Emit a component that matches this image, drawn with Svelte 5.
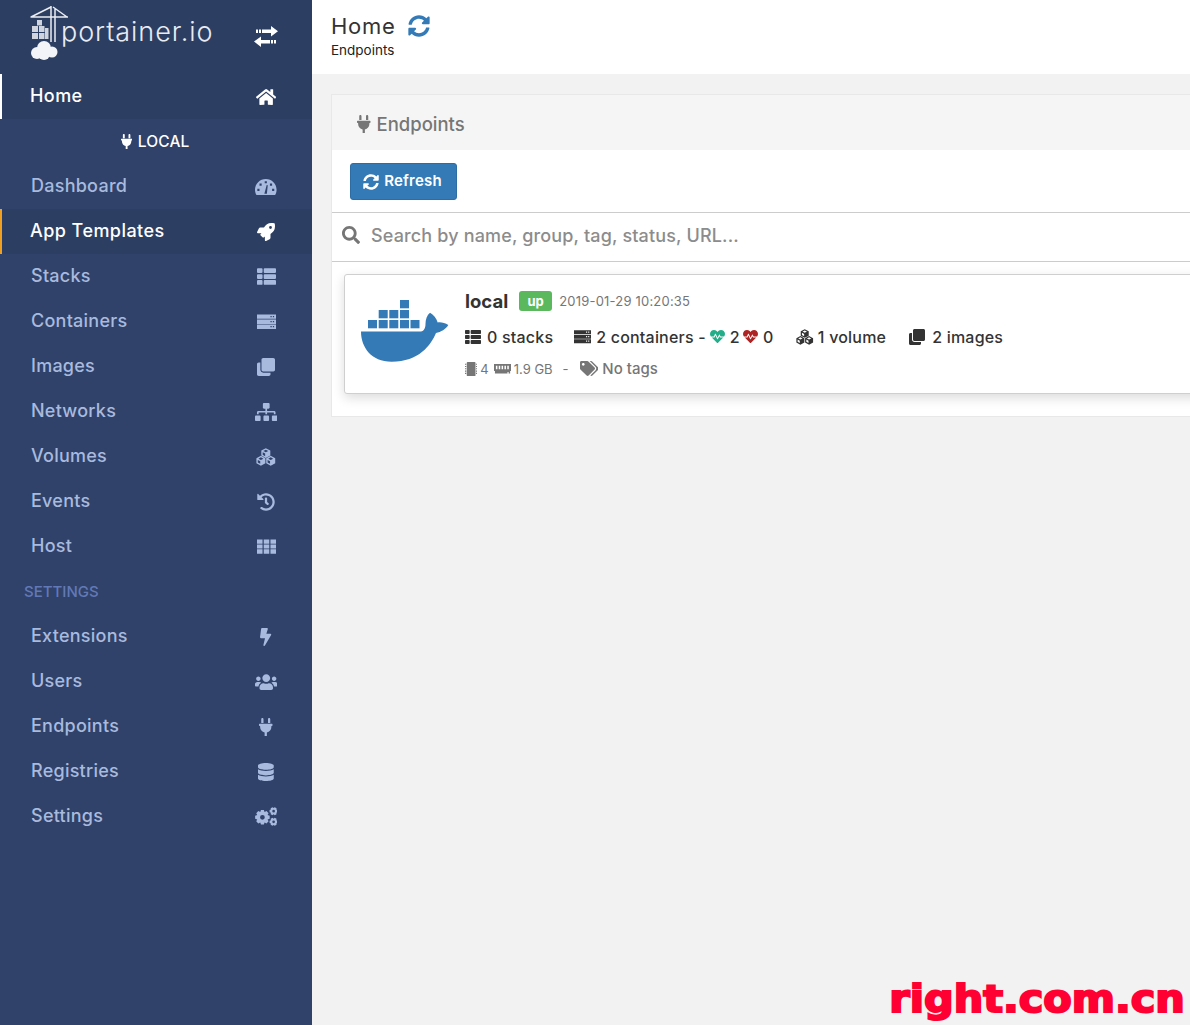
<script>
  // builds a toothed wheel path, used for the settings icon
  function gear(cx, cy, ro, ri, hole, teeth) {
    let d = '';
    const step = (Math.PI * 2) / teeth;
    for (let i = 0; i < teeth; i++) {
      const a = i * step;
      const pts = [
        [ri, a - step * 0.5],
        [ro, a - step * 0.25],
        [ro, a + step * 0.25],
        [ri, a + step * 0.5]
      ];
      for (const [r, t] of pts) {
        d += (d ? 'L' : 'M') + (cx + r * Math.cos(t)).toFixed(2) + ' ' + (cy + r * Math.sin(t)).toFixed(2);
      }
    }
    d += `Z M${cx - hole} ${cy}a${hole} ${hole} 0 1 0 ${hole * 2} 0a${hole} ${hole} 0 1 0 ${-hole * 2} 0Z`;
    return d;
  }

  function cube(x, y) {
    return `M${x} ${y - 6}L${x + 5.5} ${y - 3}V${y + 3}L${x} ${y + 6}L${x - 5.5} ${y + 3}V${y - 3}Z` +
      `M${x} ${y - 4.2}L${x + 3} ${y - 2.6}L${x} ${y - 1}L${x - 3} ${y - 2.6}Z` +
      `M${x - 3.8} ${y - 1}V${y + 2}L${x - 0.8} ${y + 3.8}V${y + 0.6}Z`;
  }

  const icons = {
    exchange: ['0 0 24 21', 'M2 3.5h2V7H2zM5 3.5h2V7H5zM8 3.5h9V0l7 5.2-7 5.2V7H8zM0 15.5L7 10.5V14h9v3.5H7V21zM17 14h2v3.5h-2zM20 14h2v3.5h-2z'],
    home: ['0 0 576 512', 'M280.37 148.26L96 300.11V464a16 16 0 0 0 16 16l112.06-.29a16 16 0 0 0 15.92-16V368a16 16 0 0 1 16-16h64a16 16 0 0 1 16 16v95.64a16 16 0 0 0 16 16.05L464 480a16 16 0 0 0 16-16V300L295.67 148.26a12.19 12.19 0 0 0-15.3 0zM571.6 251.47L488 182.56V44.05a12 12 0 0 0-12-12h-56a12 12 0 0 0-12 12v72.61L318.47 43a48 48 0 0 0-61 0L4.34 251.47a12 12 0 0 0-1.6 16.9l25.5 31A12 12 0 0 0 45.15 301l235.22-193.74a12.19 12.19 0 0 1 15.3 0L530.9 301a12 12 0 0 0 16.9-1.6l25.5-31a12 12 0 0 0-1.7-16.93z'],
    plug: ['0 0 384 512', 'M256 144V32c0-17.673 14.327-32 32-32s32 14.327 32 32v112h-64zm112 16H16c-8.837 0-16 7.163-16 16v32c0 8.837 7.163 16 16 16h16v32c0 77.406 54.969 141.971 128 156.796V512h64v-99.204c73.031-14.825 128-79.39 128-156.796v-32h16c8.837 0 16-7.163 16-16v-32c0-8.837-7.163-16-16-16zM128 144V32c0-17.673-14.327-32-32-32S64 14.327 64 32v112h64z'],
    gauge: ['0 0 24 20', 'M12 1C5.4 1 0 6.4 0 13c0 2.2.6 4.3 1.7 6h20.6c1.1-1.7 1.7-3.8 1.7-6 0-6.6-5.4-12-12-12zM10.8 3.5h2.4v2.4h-2.4zM5 6.2h2.4v2.4H5zM16.6 6.2H19v2.4h-2.4zM2.6 12h2.4v2.4H2.6zM19 12h2.4v2.4H19zM10.4 17.6L13 7.8l1.2.3-1 9.5z'],
    rocket: ['0 0 512 512', 'M505.12 19.09c-1.19-5.53-6.66-11-12.21-12.18C460.72 0 435.51 0 410.41 0 307.18 0 245.27 55.2 199.05 128H94.84c-16.35.02-35.56 11.88-42.89 26.48L2.52 253.3A28.4 28.4 0 0 0 0 264a24 24 0 0 0 24 24h103.81l-22.47 22.47c-11.37 11.36-13 32.26 0 45.25l50.9 50.9c11.16 11.19 32.16 13.16 45.28 0l22.48-22.47V488a24 24 0 0 0 24 24 28.56 28.56 0 0 0 10.71-2.52l98.73-49.39c14.63-7.3 26.51-26.5 26.51-42.86V312.8c72.6-46.31 128.03-108.41 128.03-211.1C512.08 76.5 512.08 51.3 505.12 19.09zM384.04 168a40 40 0 1 1 40.01-40 40.02 40.02 0 0 1-40.01 40z'],
    list: ['0 0 512 512', 'M149.333 216v80c0 13.255-10.745 24-24 24H24c-13.255 0-24-10.745-24-24v-80c0-13.255 10.745-24 24-24h101.333c13.255 0 24 10.745 24 24zM0 376v80c0 13.255 10.745 24 24 24h101.333c13.255 0 24-10.745 24-24v-80c0-13.255-10.745-24-24-24H24c-13.255 0-24 10.745-24 24zM125.333 32H24C10.745 32 0 42.745 0 56v80c0 13.255 10.745 24 24 24h101.333c13.255 0 24-10.745 24-24V56c0-13.255-10.745-24-24-24zm80 448H488c13.255 0 24-10.745 24-24v-80c0-13.255-10.745-24-24-24H205.333c-13.255 0-24 10.745-24 24v80c0 13.255 10.745 24 24 24zm-24-424v80c0 13.255 10.745 24 24 24H488c13.255 0 24-10.745 24-24V56c0-13.255-10.745-24-24-24H205.333c-13.255 0-24 10.745-24 24zm24 264H488c13.255 0 24-10.745 24-24v-80c0-13.255-10.745-24-24-24H205.333c-13.255 0-24 10.745-24 24v80c0 13.255 10.745 24 24 24z'],
    server: ['0 0 24 24', 'M0 3h24v5.6H0zM17 5h1.6v1.6H17zM20 5h1.6v1.6H20zM0 9.4h24v5.6H0zM17 11.4h1.6V13H17zM20 11.4h1.6V13H20zM0 15.8h24v5.6H0zM17 17.8h1.6v1.6H17zM20 17.8h1.6v1.6H20z'],
    clone: ['0 0 512 512', 'M464 0c26.51 0 48 21.49 48 48v288c0 26.51-21.49 48-48 48H176c-26.51 0-48-21.49-48-48V48c0-26.51 21.49-48 48-48h288M176 416c-44.112 0-80-35.888-80-80V128H48c-26.51 0-48 21.49-48 48v288c0 26.51 21.49 48 48 48h288c26.51 0 48-21.49 48-48v-48H176z'],
    sitemap: ['0 0 640 512', 'M128 352H32c-17.67 0-32 14.33-32 32v96c0 17.67 14.33 32 32 32h96c17.67 0 32-14.33 32-32v-96c0-17.67-14.33-32-32-32zm-24-80h192v48h48v-48h192v48h48v-57.59c0-21.17-17.23-38.41-38.41-38.41H344v-64h40c17.67 0 32-14.33 32-32V32c0-17.67-14.33-32-32-32H256c-17.67 0-32 14.33-32 32v96c0 17.67 14.33 32 32 32h40v64H94.41C73.23 224 56 241.23 56 262.41V320h48v-48zm264 80h-96c-17.67 0-32 14.33-32 32v96c0 17.67 14.33 32 32 32h96c17.67 0 32-14.33 32-32v-96c0-17.67-14.33-32-32-32zm240 0h-96c-17.67 0-32 14.33-32 32v96c0 17.67 14.33 32 32 32h96c17.67 0 32-14.33 32-32v-96c0-17.67-14.33-32-32-32z'],
    cubes: ['0 0 24 22', cube(12, 6.2) + cube(6, 15.6) + cube(18, 15.6)],
    history: ['0 0 512 512', 'M504 255.531c.253 136.64-111.18 248.372-247.82 248.468-59.015.042-113.223-20.53-155.822-54.911-11.077-8.94-11.905-25.541-1.839-35.607l11.267-11.267c8.609-8.609 22.353-9.551 31.891-1.984C173.062 425.135 212.781 440 256 440c101.705 0 184-82.311 184-184 0-101.705-82.311-184-184-184-48.814 0-93.149 18.969-126.068 49.932l50.754 50.754c10.08 10.08 2.941 27.314-11.313 27.314H24c-8.837 0-16-7.163-16-16V38.627c0-14.254 17.234-21.393 27.314-11.314l49.372 49.372C129.209 34.136 189.552 8 256 8c136.81 0 247.747 110.78 248 247.531zm-180.912 78.784l9.823-12.63c8.138-10.463 6.253-25.542-4.21-33.679L288 256.349V152c0-13.255-10.745-24-24-24h-16c-13.255 0-24 10.745-24 24v135.651l65.409 50.874c10.463 8.137 25.541 6.253 33.679-4.21z'],
    grid: ['0 0 24 24', 'M0 3h7v5.4H0zM8.5 3h7v5.4h-7zM17 3h7v5.4h-7zM0 9.4h7v5.2H0zM8.5 9.4h7v5.2h-7zM17 9.4h7v5.2h-7zM0 15.6h7V21H0zM8.5 15.6h7V21h-7zM17 15.6h7V21h-7z'],
    bolt: ['0 0 320 512', 'M296 160H180.6l42.6-129.8C227.2 15 215.7 0 200 0H56C44 0 33.8 8.9 32.2 20.8l-32 240C-1.7 275.2 9.5 288 24 288h118.7L96.6 482.5c-3.6 15.2 8 29.5 23.3 29.5 8.4 0 16.4-4.4 20.8-12l176-304c9.3-15.9-2.2-36-20.7-36z'],
    users: ['0 0 640 512', 'M96 224c35.3 0 64-28.7 64-64s-28.7-64-64-64-64 28.7-64 64 28.7 64 64 64zm448 0c35.3 0 64-28.7 64-64s-28.7-64-64-64-64 28.7-64 64 28.7 64 64 64zm32 32h-64c-17.6 0-33.5 7.1-45.1 18.6 40.3 22.1 68.9 62 75.1 109.4h66c17.7 0 32-14.3 32-32v-32c0-35.3-28.7-64-64-64zm-256 0c61.9 0 112-50.1 112-112S381.9 32 320 32 208 82.1 208 144s50.1 112 112 112zm76.8 32h-8.3c-20.8 10-43.9 16-68.5 16s-47.6-6-68.5-16h-8.3C179.6 288 128 339.6 128 403.2V432c0 26.5 21.5 48 48 48h288c26.5 0 48-21.5 48-48v-28.8c0-63.6-51.6-115.2-115.2-115.2zm-223.7-13.4C161.5 263.1 145.6 256 128 256H64c-35.3 0-64 28.7-64 64v32c0 17.7 14.3 32 32 32h65.9c6.3-47.4 34.9-87.3 75.2-109.4z'],
    database: ['0 0 448 512', 'M448 73.143v45.714C448 159.143 347.667 192 224 192S0 159.143 0 118.857V73.143C0 32.857 100.333 0 224 0s224 32.857 224 73.143zM448 176v102.857C448 319.143 347.667 352 224 352S0 319.143 0 278.857V176c48.125 33.143 136.208 48.572 224 48.572S399.874 209.143 448 176zm0 160v102.857C448 479.143 347.667 512 224 512S0 479.143 0 438.857V336c48.125 33.143 136.208 48.572 224 48.572S399.874 369.143 448 336z'],
    cogs: ['0 0 24 20', gear(7.8, 10.8, 7.8, 5.9, 2.5, 8) + gear(19.6, 4.4, 4.4, 3.3, 1.4, 6) + gear(19.6, 15.6, 4.4, 3.3, 1.4, 6)],
    sync: ['0 0 512 512', 'M370.72 133.28C339.458 104.008 298.888 87.962 255.848 88c-77.458.068-144.328 53.178-162.791 126.85-1.344 5.363-6.122 9.15-11.651 9.15H24.103c-7.498 0-13.194-6.807-11.807-14.176C33.933 94.924 134.813 8 256 8c66.448 0 126.791 26.136 171.315 68.685L463.03 40.97C478.149 25.851 504 36.559 504 57.941V192c0 13.255-10.745 24-24 24H345.941c-21.382 0-32.09-25.851-16.971-40.971l41.75-41.749zM32 296h134.059c21.382 0 32.09 25.851 16.971 40.971l-41.75 41.75c31.262 29.273 71.835 45.319 114.876 45.28 77.418-.07 144.315-53.144 162.787-126.849 1.344-5.363 6.122-9.15 11.651-9.15h57.304c7.498 0 13.194 6.807 11.807 14.176C478.067 417.076 377.187 504 256 504c-66.448 0-126.791-26.136-171.315-68.685L48.97 471.03C33.851 486.149 8 475.441 8 454.059V320c0-13.255 10.745-24 24-24z'],
    search: ['0 0 512 512', 'M505 442.7L405.3 343c-4.5-4.5-10.6-7-17-7H372c27.6-35.3 44-79.7 44-128C416 93.1 322.9 0 208 0S0 93.1 0 208s93.1 208 208 208c48.3 0 92.7-16.4 128-44v16.3c0 6.4 2.5 12.5 7 17l99.7 99.7c9.4 9.4 24.6 9.4 33.9 0l28.3-28.3c9.4-9.4 9.4-24.6.1-34zM208 336c-70.7 0-128-57.2-128-128 0-70.7 57.2-128 128-128 70.7 0 128 57.2 128 128 0 70.7-57.2 128-128 128z'],
    heart: ['0 0 512 512', 'M320.2 243.8l-49.7 99.4c-6 12.1-23.4 11.7-28.9-.6l-56.9-126.3-30 71.7H60.6l182.5 186.5c7.1 7.3 18.6 7.3 25.7 0L451.4 288H342.3l-22.1-44.2zM473.7 73.9l-2.4-2.5c-51.5-52.6-135.8-52.6-187.4 0L256 100l-27.9-28.5c-51.5-52.7-135.9-52.7-187.4 0l-2.4 2.4C-10.4 123.7-12.5 203 31 256h102.4l35.9-86.2c5.4-12.9 23.6-13.2 29.4-.4l58.2 129.3 49-97.9c5.9-11.8 22.7-11.8 28.6 0l27.6 55.2H481c43.5-53 41.4-132.3-7.3-182.1z'],
    tags: ['0 0 640 512', 'M497.941 225.941L286.059 14.059A48 48 0 0 0 252.118 0H48C21.49 0 0 21.49 0 48v204.118a48 48 0 0 0 14.059 33.941l211.882 211.882c18.744 18.745 49.136 18.746 67.882 0l204.118-204.118c18.745-18.745 18.745-49.137 0-67.882zM112 160c-26.51 0-48-21.49-48-48s21.49-48 48-48 48 21.49 48 48-21.49 48-48 48zm513.941 133.823L421.823 497.941c-18.745 18.745-49.137 18.745-67.882 0l-.36-.36L527.64 323.522c16.999-16.999 26.36-39.6 26.36-63.64s-9.362-46.641-26.36-63.64L331.397 0h48.721a48 48 0 0 1 33.941 14.059l211.882 211.882c18.745 18.745 18.745 49.137 0 67.882z'],
    chip: ['0 0 14 16', 'M3 0h8a1 1 0 0 1 1 1v14a1 1 0 0 1-1 1H3a1 1 0 0 1-1-1V1a1 1 0 0 1 1-1zM0 2h1.4v1.2H0zM0 4.6h1.4v1.2H0zM0 7.2h1.4v1.2H0zM0 9.8h1.4V11H0zM0 12.4h1.4v1.2H0zM12.6 2H14v1.2h-1.4zM12.6 4.6H14v1.2h-1.4zM12.6 7.2H14v1.2h-1.4zM12.6 9.8H14V11h-1.4zM12.6 12.4H14v1.2h-1.4z'],
    memory: ['0 0 18 12', 'M0 1h18v7.5h-1V11h-1.6V9.5h-1.2V11H1V8.5H0zM2 3h1.6v3.5H2zM5 3h1.6v3.5H5zM8 3h1.6v3.5H8zM11 3h1.6v3.5H11zM14 3h1.6v3.5H14z']
  };

  const mainNav = [
    { label: 'Stacks', icon: 'list', size: 'h19' },
    { label: 'Containers', icon: 'server', size: 'h19' },
    { label: 'Images', icon: 'clone', size: 'h18' },
    { label: 'Networks', icon: 'sitemap', size: 'h18' },
    { label: 'Volumes', icon: 'cubes', size: 'h18' },
    { label: 'Events', icon: 'history', size: 'h18' },
    { label: 'Host', icon: 'grid', size: 'h19' }
  ];

  const settingsNav = [
    { label: 'Extensions', icon: 'bolt', size: 'h18' },
    { label: 'Users', icon: 'users', size: 'h18' },
    { label: 'Endpoints', icon: 'plug', size: 'h18' },
    { label: 'Registries', icon: 'database', size: 'h18' },
    { label: 'Settings', icon: 'cogs', size: 'h19' }
  ];
</script>

{#snippet icon(name, cls)}
  <svg class="ico {cls}" viewBox={icons[name][0]} fill="currentColor" fill-rule={['server', 'gauge', 'cubes', 'cogs', 'memory'].includes(name) ? 'evenodd' : 'nonzero'} aria-hidden="true">
    <path d={icons[name][1]} />
  </svg>
{/snippet}

<div class="page">
  <aside class="sidebar">
    <div class="brand">
      <div class="logo">
        <svg class="crane" viewBox="0 0 38 54" aria-hidden="true">
          <g stroke="#e9ecf2" fill="none" stroke-width="1.5">
            <path d="M0.5 11H38M21 0V36M25 3V36M21 1L1 11M23 1L37 11" />
          </g>
          <g fill="#cfd4de">
            <rect x="7" y="14" width="5" height="5.5" />
            <rect x="2" y="20" width="6" height="6" /><rect x="9" y="20" width="5.5" height="6" />
            <rect x="2" y="27" width="6" height="6" /><rect x="9" y="27" width="5.5" height="6" /><rect x="15" y="22" width="3.5" height="11" />
          </g>
          <g fill="#f2f4f7">
            <circle cx="7" cy="47" r="6" /><circle cx="14" cy="42" r="7" /><circle cx="22" cy="46" r="5.5" /><circle cx="14" cy="48" r="6" />
          </g>
        </svg>
        <span class="logo-text">portainer.io</span>
      </div>
      <div class="icon-cell exchange">{@render icon('exchange', 'h21')}</div>
    </div>

    <a class="row strong marked" href="#home">
      <span>Home</span>
      <div class="icon-cell">{@render icon('home', 'h18')}</div>
    </a>

    <div class="section">
      <div class="endpoint">{@render icon('plug', 'h15')} LOCAL</div>
      <a class="row" href="#dashboard">
        <span>Dashboard</span>
        <div class="icon-cell">{@render icon('gauge', 'h18')}</div>
      </a>
      <a class="row strong marked orange" href="#templates">
        <span>App Templates</span>
        <div class="icon-cell">{@render icon('rocket', 'h18')}</div>
      </a>
      {#each mainNav as item}
        <a class="row" href="#{item.label}">
          <span>{item.label}</span>
          <div class="icon-cell">{@render icon(item.icon, item.size)}</div>
        </a>
      {/each}
      <div class="nav-title">SETTINGS</div>
      {#each settingsNav as item}
        <a class="row" href="#{item.label}">
          <span>{item.label}</span>
          <div class="icon-cell">{@render icon(item.icon, item.size)}</div>
        </a>
      {/each}
    </div>
  </aside>

  <main class="main">
    <header class="topbar">
      <div class="title">
        Home
        <span class="reload">{@render icon('sync', 'h22')}</span>
      </div>
      <div class="crumb">Endpoints</div>
    </header>

    <section class="content">
      <div class="widget">
        <div class="widget-head">{@render icon('plug', 'h18')} Endpoints</div>
        <div class="actions">
          <button class="btn">{@render icon('sync', 'h16')} <span class="btn-label">Refresh</span></button>
        </div>
        <div class="searchbar">
          {@render icon('search', 'h18')}
          <input placeholder="Search by name, group, tag, status, URL..." />
        </div>
        <div class="list">
          <div class="card">
            <svg class="whale" viewBox="0 0 88 63" fill="#337ab7" aria-hidden="true">
              <path d="M0 32.5H60C63 32 64.5 29 64.5 25C64.5 20 66 16 69 13.7C72.5 16 75.5 19 76.7 23.5C80 23 84 24 87.3 26C85 30 80 33 75 34C70 46 58 62.7 30.7 62.7C10 62.7 0 48 0 32.5Z" />
              <rect x="39" y="1" width="9" height="8.3" />
              <rect x="17.7" y="11" width="9" height="8.3" /><rect x="28.3" y="11" width="9" height="8.3" /><rect x="39" y="11" width="9" height="8.3" />
              <rect x="7" y="21" width="9" height="8.3" /><rect x="17.7" y="21" width="9" height="8.3" /><rect x="28.3" y="21" width="9" height="8.3" /><rect x="39" y="21" width="9" height="8.3" /><rect x="49.5" y="21" width="9" height="8.3" />
            </svg>
            <div class="details">
              <div class="line-name">
                <b class="name">local</b>
                <span class="badge">up</span>
                <span class="date">2019-01-29 10:20:35</span>
              </div>
              <div class="line-stats">
                <span class="stat first">{@render icon('list', 'h16')} 0 stacks</span>
                <span class="stat containers">{@render icon('server', 'h17')} 2 containers -
                  <i class="ok">{@render icon('heart', 'h15')}</i> 2
                  <i class="bad">{@render icon('heart', 'h15')}</i> 0
                </span>
                <span class="stat volumes">{@render icon('cubes', 'h16')} 1 volume</span>
                <span class="stat pictures">{@render icon('clone', 'h16')} 2 images</span>
              </div>
              <div class="line-meta">
                <span class="meta">{@render icon('chip', 'h14')} 4</span>
                <span class="meta">{@render icon('memory', 'h11')} 1.9 GB</span>
                <span class="meta dash">-</span>
                <span class="meta tags">{@render icon('tags', 'h15')} No tags</span>
              </div>
            </div>
          </div>
        </div>
      </div>
    </section>
  </main>

  <div class="watermark">right.com.cn</div>
</div>

<style>
  :global(body) {
    margin: 0;
    font-family: "Inter", "Open Sans", sans-serif;
    color: #333;
  }

  .page {
    position: relative;
    display: flex;
    height: 1025px;
    overflow: hidden;
    background: #f2f2f2;
  }

  .ico { display: block; flex: none; }
  .h11 { height: 11.4px; }
  .h14 { height: 14px; }
  .h15 { height: 15px; }
  .h16 { height: 16px; }
  .h17 { height: 17px; }
  .h18 { height: 18px; }
  .h19 { height: 19px; }
  .h21 { height: 21px; }
  .h22 { height: 22px; }

  /* Sidebar */
  .sidebar {
    width: 312px;
    flex: none;
    background: #2d3e63;
  }

  .brand {
    height: 74px;
    display: flex;
    align-items: center;
    justify-content: space-between;
    padding: 0 34px 8px 30px;
    color: #fff;
    box-sizing: border-box;
  }

  .logo { display: flex; align-items: flex-start; }
  .crane { width: 38px; height: 54px; }
  .logo-text {
    margin: 9px 0 0 -7px;
    font-size: 27px;
    font-weight: 300;
    letter-spacing: 0.93px;
    color: #e9ecf2;
  }

  .exchange { margin-top: 6px; }

  .icon-cell {
    width: 24px;
    display: flex;
    justify-content: center;
    color: inherit;
  }

  .row {
    height: 45px;
    display: flex;
    align-items: center;
    justify-content: space-between;
    padding: 0 34px 0 31px;
    box-sizing: border-box;
    color: #a8bade;
    font-size: 18px;
    font-weight: 500;
    letter-spacing: 0.25px;
    text-decoration: none;
    background: #30426a;
  }

  .row span { margin-bottom: 2px; }

  .row.strong {
    color: #fff;
    background: #2d3e63;
    letter-spacing: 0.45px;
  }

  .marked {
    border-left: 2px solid #fff;
    padding-left: 28px;
  }

  .marked.orange { border-left-color: #f0a020; }

  .section {
    background: #30426a;
    height: 951px;
  }

  .endpoint {
    height: 45px;
    display: flex;
    align-items: center;
    justify-content: center;
    gap: 6px;
    box-sizing: border-box;
    padding-right: 2px;
    color: #fff;
    font-size: 15.5px;
    font-weight: 500;
    letter-spacing: 0.15px;
  }

  .nav-title {
    height: 45px;
    display: flex;
    align-items: center;
    padding-left: 24px;
    color: #6279b8;
    font-size: 15px;
    font-weight: 500;
  }

  /* Main */
  .main {
    flex: 1;
    min-width: 0;
    overflow: hidden;
  }

  .topbar {
    height: 74px;
    box-sizing: border-box;
    padding: 11px 0 0 19px;
    background: #fff;
  }

  .title {
    display: flex;
    align-items: center;
    gap: 12px;
    height: 30px;
    font-size: 22px;
    letter-spacing: 0.75px;
    color: #333;
  }

  .reload { color: #337ab7; }

  .crumb {
    margin-top: 1px;
    font-size: 13.5px;
    color: #222;
  }

  .content { padding: 20px 0 0 19px; }

  .widget {
    width: 900px;
    background: #fff;
    border: 1px solid #e8e8e8;
    box-sizing: border-box;
  }

  .widget-head {
    height: 55px;
    display: flex;
    align-items: center;
    gap: 6px;
    padding: 3px 0 0 25px;
    box-sizing: border-box;
    background: #f5f5f5;
    color: #767676;
    font-size: 18.5px;
    font-weight: 500;
  }

  .actions {
    height: 63px;
    display: flex;
    align-items: center;
    padding: 1px 0 0 18px;
    box-sizing: border-box;
    border-bottom: 1px solid #ccc;
  }

  .btn {
    height: 37px;
    width: 107px;
    display: flex;
    align-items: center;
    justify-content: center;
    gap: 5px;
    padding: 0 2px 0 0;
    background: #337ab7;
    border: 1px solid #2e6da4;
    border-radius: 3px;
    color: #fff;
    font-family: inherit;
    font-size: 15px;
    font-weight: 600;
    letter-spacing: 0.2px;
  }

  .btn-label { margin-bottom: 2px; }

  .searchbar {
    height: 49px;
    box-sizing: border-box;
    display: flex;
    align-items: center;
    gap: 11px;
    padding: 0 0 4px 10px;
    color: #767676;
    border-bottom: 1px solid #ccc;
  }

  .searchbar input {
    flex: 1;
    border: 0;
    outline: 0;
    padding: 0;
    font-family: inherit;
    font-size: 18px;
    font-weight: 500;
    letter-spacing: 0.15px;
    color: #333;
    background: transparent;
  }

  .searchbar input::placeholder { color: #8c8c8c; opacity: 1; }

  .list { padding: 12px 0 22px 12px; }

  .card {
    height: 120px;
    box-sizing: border-box;
    display: flex;
    align-items: center;
    gap: 16px;
    padding-left: 16px;
    border: 1px solid #cfcfcf;
    border-radius: 3px;
    box-shadow: 0 4px 12px rgba(0, 0, 0, 0.14);
    background: #fff;
  }

  .whale { width: 88px; height: 63px; flex: none; margin-top: -7px; }

  .details {
    display: flex;
    flex-direction: column;
    margin-top: 1px;
  }

  .line-name { display: flex; align-items: center; height: 24px; }
  .name { font-size: 18.5px; font-weight: 700; color: #333; }
  .badge {
    margin-left: 11px;
    width: 33px;
    height: 20px;
    display: flex;
    align-items: center;
    justify-content: center;
    border-radius: 3px;
    background: #5cb85c;
    color: #fff;
    font-size: 13px;
    font-weight: 700;
  }
  .date {
    margin-left: 7px;
    font-size: 13px;
    letter-spacing: 0.2px;
    color: #767676;
  }

  .line-stats {
    display: flex;
    align-items: center;
    gap: 21px;
    margin-top: 12px;
    height: 24px;
    font-size: 16px;
    font-weight: 500;
    letter-spacing: 0.2px;
    color: #333;
  }

  .stat { display: flex; align-items: center; gap: 5px; white-space: nowrap; }
  .stat i { display: block; }
  .first { gap: 6px; }
  .containers { margin-right: 2px; }
  .volumes { gap: 4px; }
  .pictures { gap: 7px; margin-left: 2px; }
  .ok { color: #23ae89; margin-left: -1px; }
  .bad { color: #ae2323; margin-left: -2px; }

  .line-meta {
    display: flex;
    align-items: center;
    gap: 5px;
    margin-top: 8px;
    height: 24px;
    font-size: 13px;
    color: #767676;
  }

  .meta { display: flex; align-items: center; gap: 3px; white-space: nowrap; }
  .dash { margin: 0 6px 0 5px; }
  .tags { gap: 4px; font-size: 15px; font-weight: 500; }

  .watermark {
    position: absolute;
    right: 5px;
    bottom: 4px;
    color: #ff0033;
    font-family: "DejaVu Sans", sans-serif;
    font-size: 37px;
    font-weight: 700;
    -webkit-text-stroke: 2px #ff0033;
    transform: scaleX(1.12);
    transform-origin: right center;
  }
</style>
